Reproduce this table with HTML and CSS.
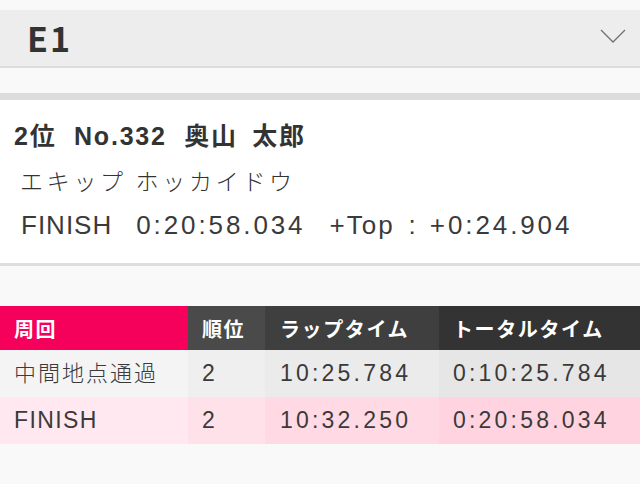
FILE: index.html
```html
<!DOCTYPE html>
<html lang="ja">
<head>
<meta charset="utf-8">
<link rel="stylesheet" href="styles.css">
</head>
<body>
<div class="page">
  <div class="header">
    <span class="title">E1</span>
    <svg class="chev" width="26" height="14" viewBox="0 0 26 14"><path d="M1 1 L13 13 L25 1" fill="none" stroke="#707070" stroke-width="1.3"/></svg>
  </div>
  <div class="card">
    <div class="line name">2位&nbsp; No.332&nbsp; 奥山&ensp;太郎</div>
    <div class="line team">エキップ ホッカイドウ</div>
    <div class="line time"><span class="word">FINISH</span><span class="num">0:20:58.034</span><span class="word top">+Top</span><span class="colon">:</span><span class="num">+0:24.904</span></div>
  </div>
  <table class="laps">
    <thead>
      <tr><th class="c1">周回</th><th class="c2">順位</th><th class="c3">ラップタイム</th><th class="c4">トータルタイム</th></tr>
    </thead>
    <tbody>
      <tr class="r1"><td class="c1 jp">中間地点通過</td><td class="c2 num">2</td><td class="c3 num">10:25.784</td><td class="c4 num">0:10:25.784</td></tr>
      <tr class="r2"><td class="c1">FINISH</td><td class="c2 num">2</td><td class="c3 num">10:32.250</td><td class="c4 num">0:20:58.034</td></tr>
    </tbody>
  </table>
</div>
</body>
</html>
```

FILE: styles.css
```css
html, body {
  margin: 0;
  padding: 0;
  background: #f9f9f9;
}
.page {
  padding-top: 10px;
  font-family: "Liberation Sans", "Noto Sans CJK JP", sans-serif;
  color: #333;
}
.header {
  height: 56px;
  background: #ededed;
  border-bottom: 2px solid #dedede;
  display: flex;
  align-items: center;
  justify-content: space-between;
  padding: 0 14px 0 27px;
}
.title {
  font-family: "Noto Sans CJK JP", sans-serif;
  font-weight: 700;
  font-size: 34px;
  letter-spacing: 2px;
  color: #333;
  line-height: 1;
}
.chev {
  display: block;
  margin-top: -4px;
}
.card {
  margin-top: 25px;
  background: #fff;
  border-top: 7px solid #dddddd;
  border-bottom: 3px solid #dedede;
  padding: 14px 0 0 0;
  height: 149px;
}
.line {
  line-height: 45px;
  white-space: nowrap;
}
.name {
  font-weight: 700;
  font-size: 25px;
  padding-left: 14px;
  letter-spacing: 1.8px;
  line-height: 44px;
}
.team {
  font-family: "Noto Sans CJK JP", sans-serif;
  font-weight: 300;
  font-size: 23px;
  padding-left: 20px;
  letter-spacing: 3.7px;
}
.time {
  display: flex;
  align-items: baseline;
  font-size: 26px;
  padding-left: 21px;
  color: #3a3a3a;
}
.time .word {
  letter-spacing: 1px;
  margin-right: 24px;
}
.time .num {
  letter-spacing: 2.9px;
  margin-right: 24px;
}
.time .top {
  letter-spacing: 2px;
  margin-right: 14px;
}
.time .colon {
  margin-right: 14px;
}
.laps {
  margin-top: 40px;
  width: 640px;
  border-collapse: collapse;
  table-layout: fixed;
}
.laps th, .laps td {
  text-align: left;
  padding: 0 0 0 14px;
  white-space: nowrap;
}
.laps th {
  height: 44px;
  color: #fff;
  font-family: "Noto Sans CJK JP", sans-serif;
  font-weight: 700;
  font-size: 20px;
  letter-spacing: 1.6px;
}
.laps td {
  height: 47px;
  font-weight: 400;
  font-size: 23px;
  letter-spacing: 1.4px;
  color: #3a3a3a;
}
.laps td.num { letter-spacing: 3.2px; }
.laps td.jp {
  font-family: "Noto Sans CJK JP", sans-serif;
  font-weight: 300;
  font-size: 22px;
  letter-spacing: 2px;
  padding-bottom: 5px;
  height: 42px;
}
.laps .c1 { width: 174px; }
.laps .c2 { width: 63px; }
.laps .c3 { width: 159px; padding-left: 15px; }
.laps .c4 { padding-left: 14px; }
th.c1 { background: #f5005a; }
th.c2 { background: #4a4a4a; }
th.c3 { background: #3f3f3f; }
th.c4 { background: #333333; }
.r1 .c1 { background: #f4f4f4; }
.r1 .c2 { background: #efefef; }
.r1 .c3 { background: #ebebeb; }
.r1 .c4 { background: #e6e6e6; }
.r2 .c1 { background: #ffe8ef; }
.r2 .c2 { background: #ffe1ea; }
.r2 .c3 { background: #ffdae5; }
.r2 .c4 { background: #ffd4e0; }
```
